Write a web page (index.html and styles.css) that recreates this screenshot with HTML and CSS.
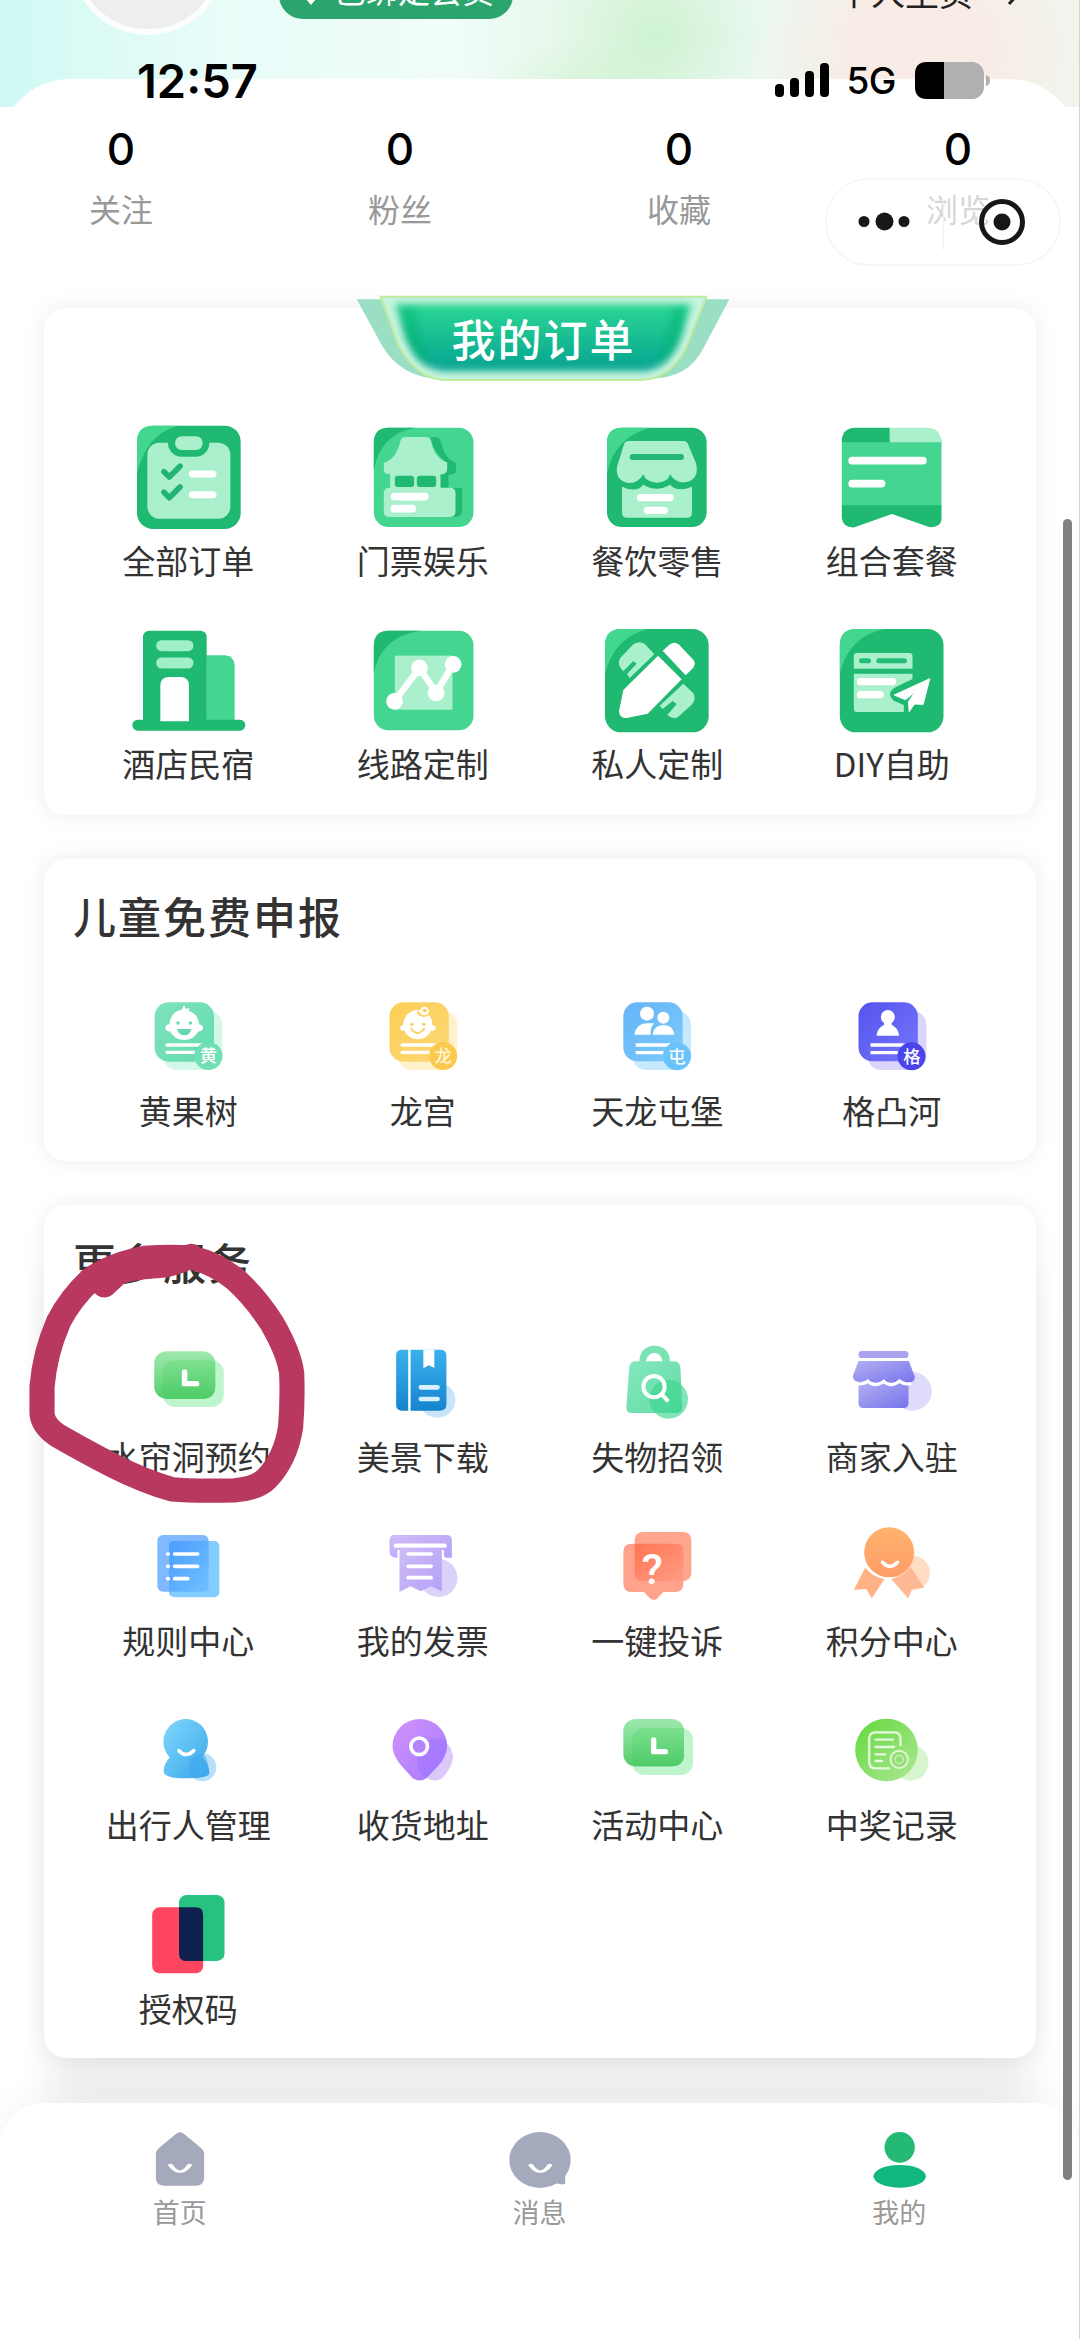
FILE: index.html
```html
<!DOCTYPE html>
<html lang="zh-CN">
<head>
<meta charset="utf-8">
<title>我的</title>
<link rel="stylesheet" href="styles.css">
</head>
<body>
<svg class="defs" aria-hidden="true">
  <defs>
    <linearGradient id="gBanner" x1="0" y1="0" x2="0" y2="1"><stop offset="0" stop-color="#2dd793"/><stop offset="1" stop-color="#04a391"/></linearGradient>
    <linearGradient id="gMint" x1="0" y1="0" x2="1" y2="1"><stop offset="0" stop-color="#80e2bc"/><stop offset="1" stop-color="#62dcae"/></linearGradient>
    <linearGradient id="gYellow" x1="0" y1="0" x2="1" y2="1"><stop offset="0" stop-color="#fbcf55"/><stop offset="1" stop-color="#fcd777"/></linearGradient>
    <linearGradient id="gSky" x1="0" y1="0" x2="1" y2="1"><stop offset="0" stop-color="#65b4f7"/><stop offset="1" stop-color="#7bcbfb"/></linearGradient>
    <linearGradient id="gIndigo" x1="0" y1="0" x2="1" y2="1"><stop offset="0" stop-color="#5553ee"/><stop offset="1" stop-color="#7576fb"/></linearGradient>
    <linearGradient id="gGreen" x1="0" y1="0" x2="0" y2="1"><stop offset="0" stop-color="#7de090"/><stop offset="1" stop-color="#4ecb66"/></linearGradient>
    <linearGradient id="gGreenSoft" x1="0" y1="0" x2="0" y2="1"><stop offset="0" stop-color="#9ee9ad"/><stop offset="1" stop-color="#54cd6c"/></linearGradient>
    <linearGradient id="gBook" x1="0" y1="0" x2="0" y2="1"><stop offset="0" stop-color="#3bb1ec"/><stop offset="1" stop-color="#1584cf"/></linearGradient>
    <linearGradient id="gBag" x1="0" y1="0" x2="1" y2="1"><stop offset="0" stop-color="#84e8be"/><stop offset="1" stop-color="#63dba4"/></linearGradient>
    <linearGradient id="gShop" x1="0" y1="0" x2="1" y2="1"><stop offset="0" stop-color="#b4aff2"/><stop offset="1" stop-color="#7673ed"/></linearGradient>
    <linearGradient id="gDoc" x1="0" y1="0" x2="1" y2="1"><stop offset="0" stop-color="#4c9cff"/><stop offset="1" stop-color="#6fc1ff"/></linearGradient>
    <linearGradient id="gLilac" x1="0" y1="0" x2="1" y2="1"><stop offset="0" stop-color="#cfbdf7"/><stop offset="1" stop-color="#b5a0f7"/></linearGradient>
    <linearGradient id="gCoral" x1="0" y1="0" x2="1" y2="1"><stop offset="0" stop-color="#ff7650"/><stop offset="1" stop-color="#ff9c86"/></linearGradient>
    <linearGradient id="gOrange" x1="0" y1="0" x2="0" y2="1"><stop offset="0" stop-color="#ffb36d"/><stop offset="1" stop-color="#ff9c68"/></linearGradient>
    <linearGradient id="gPerson" x1="0" y1="0" x2="1" y2="1"><stop offset="0" stop-color="#80d8fc"/><stop offset="1" stop-color="#3aa6ea"/></linearGradient>
    <linearGradient id="gPin" x1="0" y1="0" x2="1" y2="1"><stop offset="0" stop-color="#d292fb"/><stop offset="1" stop-color="#a67bff"/></linearGradient>
    <linearGradient id="gLime" x1="0" y1="0" x2="1" y2="1"><stop offset="0" stop-color="#62d93a"/><stop offset="1" stop-color="#aee897"/></linearGradient>
    <filter id="soft" x="-20%" y="-20%" width="140%" height="140%"><feGaussianBlur stdDeviation="11"/></filter>
    <clipPath id="cupClip"><path d="M152 48H1129L1070 200Q1020 302 930 302H350Q260 302 205 195Z"/></clipPath>
  </defs>
</svg>

<div class="page">
  <header class="profile">
    <div class="avatar"></div>
    <div class="member">
      <svg class="member-icon" viewBox="0 0 28 28"><path d="M14 27L4 15Q0 6 8 3Q12 2 14 6Q16 2 20 3Q28 6 24 15Z" fill="#fff"/></svg>
      <span>已绑定会员</span>
    </div>
    <div class="homepage"><span>个人主页</span>
      <svg class="chevron" viewBox="0 0 16 30"><path d="M2 2L14 15L2 28" fill="none" stroke="#222" stroke-width="3"/></svg>
    </div>
  </header>

  <main class="panel">
    <section class="stats">
      <div class="stat"><b>0</b><span>关注</span></div>
      <div class="stat"><b>0</b><span>粉丝</span></div>
      <div class="stat"><b>0</b><span>收藏</span></div>
      <div class="stat"><b>0</b><span>浏览</span></div>
    </section>

    <section class="card orders">
      <div class="banner">
        <svg viewBox="0 0 1260 360">
          <path d="M80 58H1198L1120 205Q1075 296 960 296H320Q210 290 155 195Z" fill="#9adfc4"/>
          <g clip-path="url(#cupClip)">
            <rect x="140" y="40" width="1000" height="270" fill="#c6f3de"/>
            <path d="M195 72H1085L1045 190Q1000 278 930 273H350Q270 273 230 180Z" fill="url(#gBanner)" filter="url(#soft)"/>
            <path d="M215 85H250L300 260Q250 235 222 150ZM1065 85H1032L980 260Q1030 235 1058 150Z" fill="#05b273" opacity=".5" filter="url(#soft)"/>
          </g>
          <path d="M152 50H1129L1070 200Q1020 300 930 300H350Q260 300 205 195Z" fill="none" stroke="#bfeb9f" stroke-width="6"/>
        </svg>
        <h2>我的订单</h2>
      </div>
      <div class="grid">
        <div class="item"><svg viewBox="84 24 360 360">
          <rect x="111" y="47" width="311" height="310" rx="48" fill="#1fb972"/><path d="M159 47H235Q140 70 111 190V95Q111 47 159 47Z" fill="#42d68f"/>
          <rect x="142" y="98" width="249" height="228" rx="36" fill="#aaf0cd"/><rect x="204" y="58" width="124" height="82" rx="41" fill="#1fb972"/><rect x="225" y="79" width="83" height="41" rx="20" fill="#aaf0cd"/>
          <path d="M192 185L208 201L240 169M192 247L208 263L240 231" fill="none" stroke="#23b377" stroke-width="17" stroke-linecap="round" stroke-linejoin="round"/>
          <path d="M277 192H339M277 254H339" stroke="#fff" stroke-width="21" stroke-linecap="round"/></svg><span>全部订单</span></div>
        <div class="item"><svg viewBox="787.5 24 360 360">
          <rect x="820" y="53" width="299" height="298" rx="44" fill="#44d691"/><path d="M864 53H945Q840 70 820 180V97Q820 53 864 53Z" fill="#1fb972"/>
          <path d="M990 82H1008Q1018 84 1022 98Q1032 145 1066 160V186Q1060 195 1044 194V234H1085V305Q1082 321 1060 321H1040V234H1016V194H1030V150Q1000 130 990 82Z" fill="#1fb972"/>
          <path d="M900 92Q903 81 915 81H976Q987 81 992 95Q1003 145 1040 157V180Q1038 192 1025 192H862Q850 190 850 178V158Q887 148 900 92Z" fill="#aaf0cd"/>
          <path d="M869 190H1020V240H869Z" fill="#aaf0cd"/><rect x="883" y="197" width="58" height="34" rx="9" fill="#1fb972"/><rect x="949" y="197" width="58" height="34" rx="9" fill="#1fb972"/>
          <rect x="850" y="233" width="215" height="88" rx="15" fill="#aaf0cd"/><path d="M882 260H973M882 296H935" stroke="#fff" stroke-width="23" stroke-linecap="round"/></svg><span>门票娱乐</span></div>
        <div class="item"><svg viewBox="111 24 360 360">
          <rect x="141" y="53" width="299" height="298" rx="44" fill="#1fb972"/><path d="M185 53H270Q165 80 141 190V97Q141 53 185 53Z" fill="#42d68f"/>
          <path d="M186 230Q228 250 250 224Q290 248 330 224Q352 248 396 230V308Q396 323 381 323H201Q186 323 186 308Z" fill="#aaf0cd"/>
          <path d="M205 93H370Q380 93 384 103L408 160Q418 200 388 214Q350 226 330 193Q325 218 290 218Q257 216 250 193Q235 220 205 219Q166 212 171 170L192 103Q196 93 205 93Z" fill="#aaf0cd"/>
          <path d="M218 141H363" stroke="#23b875" stroke-width="18" stroke-linecap="round"/><path d="M242 263H330M262 301H313" stroke="#fff" stroke-width="22" stroke-linecap="round"/></svg><span>餐饮零售</span></div>
        <div class="item"><svg viewBox="814.5 24 360 360">
          <path d="M844 90H1143V290H844Z" fill="#44d691"/><path d="M844 97V88Q848 53 885 53H988V97Z" fill="#1fb972"/><path d="M988 53H1103Q1140 55 1143 97H988Z" fill="#aaf0cd"/>
          <path d="M844 286H1143V330Q1140 352 1108 352L994 312L882 352Q848 354 844 325Z" fill="#1fb972"/>
          <path d="M875 152H1087M875 221H963" stroke="#fff" stroke-width="23" stroke-linecap="round"/></svg><span>组合套餐</span></div>
        <div class="item"><svg viewBox="84 633 360 360">
          <path d="M319 736H375Q404 740 404 766V935H319Z" fill="#44d691"/><path d="M129 935V682Q129 662 149 662H300Q320 662 320 682V935Z" fill="#1fb972"/>
          <rect x="97" y="929" width="339" height="33" rx="16" fill="#1fb972"/><path d="M181 934V827Q181 801 207 801H241Q267 801 267 827V934Z" fill="#fff"/>
          <path d="M185 707H264M185 759H264" stroke="#a0efc6" stroke-width="33" stroke-linecap="round"/></svg><span>酒店民宿</span></div>
        <div class="item"><svg viewBox="787.5 633 360 360">
          <rect x="820" y="662" width="299" height="299" rx="44" fill="#44d691"/><path d="M864 662H960Q840 680 820 790V706Q820 662 864 662Z" fill="#1fb972"/>
          <rect x="883" y="737" width="173" height="162" fill="#aaf0cd"/><path d="M882 874L957 774L1007 848L1058 763" fill="none" stroke="#fff" stroke-width="19"/>
          <g fill="#fff"><circle cx="882" cy="874" r="25"/><circle cx="957" cy="774" r="25"/><circle cx="1007" cy="849" r="25"/><circle cx="1058" cy="763" r="25"/></g></svg><span>线路定制</span></div>
        <div class="item"><svg viewBox="111 633 360 360">
          <rect x="135" y="657" width="311" height="310" rx="48" fill="#1fb972"/><path d="M183 657H265Q165 680 135 790V705Q135 657 183 657Z" fill="#42d68f"/>
          <path d="M220 703Q240 690 255 703L283 733L209 804L201 792L230 761L220 753L190 784Q170 765 180 745ZM370 821L400 850Q410 867 395 884L353 922Q340 930 322 915L350 882L338 873L308 897L299 887Z" fill="#aaf0cd"/>
          <path d="M294 737L365 808L263 911L200 924Q178 926 177 904L190 840Z" fill="#fff"/><path d="M308 722L330 703Q343 692 358 705L397 746Q410 758 400 773L377 796Z" fill="#fff"/></svg><span>私人定制</span></div>
        <div class="item"><svg viewBox="814.5 633 360 360">
          <rect x="838" y="657" width="311" height="310" rx="48" fill="#1fb972"/><path d="M886 657H970Q865 680 838 790V705Q838 657 886 657Z" fill="#42d68f"/>
          <path d="M880 776V739Q880 729 890 729H1046Q1056 729 1056 739V776ZM880 791H1056V807L1005 832Q975 850 1000 872L1030 885V906H890Q880 906 880 896Z" fill="#aaf0cd"/>
          <path d="M903 752H924M955 752H1032" stroke="#24bd77" stroke-width="15" stroke-linecap="round"/><path d="M900 815H996M900 854H959" stroke="#fff" stroke-width="22" stroke-linecap="round"/>
          <path d="M1108 806L1001 855L1035 869L1064 845L1044 875L1046 905L1062 882L1088 883Z" fill="#fff" stroke="#fff" stroke-width="3"/></svg><span>DIY自助</span></div>
      </div>
    </section>

    <section class="card small">
      <h2>儿童免费申报</h2>
      <div class="grid">
        <div class="item"><svg viewBox="318 432 312 312">
          <rect x="400" y="513" width="177" height="177" rx="42" fill="#d3f7e9"/><rect x="374" y="487" width="178" height="178" rx="42" fill="url(#gMint)"/>
          <path d="M418 553Q422 515 455 509L462 496L467 506L480 505L475 512Q505 520 507 553Q519 555 519 565Q516 575 504 575Q490 600 463 600Q435 600 421 575Q407 574 406 564Q407 554 418 553Z" fill="#fff"/><path d="M441 567H485Q479 586 463 586Q447 586 441 567Z" fill="#64d9ac"/><circle cx="444" cy="549" r="5" fill="#64d9ac"/><circle cx="481" cy="549" r="5" fill="#64d9ac"/>
          <path d="M411 615H514M411 637H495" stroke="#fff" stroke-width="10" stroke-linecap="round"/><circle cx="535" cy="648" r="42" fill="#70dfb4"/><text x="535" y="667" class="mark">黄</text></svg><span>黄果树</span></div>
        <div class="item"><svg viewBox="1021.5 432 312 312">
          <rect x="1103" y="513" width="177" height="177" rx="42" fill="#fff1c9"/><rect x="1077" y="487" width="178" height="178" rx="42" fill="url(#gYellow)"/>
          <circle cx="1162" cy="554" r="44" fill="#fff"/><circle cx="1117" cy="564" r="8" fill="#fff"/><circle cx="1207" cy="564" r="8" fill="#fff"/><path d="M1160 515Q1175 535 1194 522M1190 507Q1180 507 1183 517" fill="none" stroke="#fbcf5e" stroke-width="7"/><circle cx="1182" cy="513" r="10" fill="none" stroke="#fff" stroke-width="6"/><path d="M1141 564Q1161 594 1183 564" fill="none" stroke="#fbcf5e" stroke-width="6"/><circle cx="1144" cy="553" r="5" fill="#fbcf5e"/><circle cx="1180" cy="553" r="5" fill="#fbcf5e"/>
          <path d="M1115 615H1218M1115 637H1198" stroke="#fff" stroke-width="10" stroke-linecap="round"/><circle cx="1238" cy="648" r="42" fill="#fac94e"/><text x="1238" y="667" class="mark pale">龙</text></svg><span>龙宫</span></div>
        <div class="item"><svg viewBox="135 72 312 312">
          <rect x="217" y="153" width="176" height="177" rx="42" fill="#c7e9fd"/><rect x="190" y="127" width="178" height="177" rx="42" fill="url(#gSky)"/>
          <g fill="#fff"><circle cx="261" cy="161" r="21"/><circle cx="310" cy="173" r="18"/><path d="M223 224Q228 191 261 190H282Q270 202 272 224ZM278 224Q281 196 311 195Q340 196 343 224Z"/></g>
          <path d="M227 255H330M227 278H311" stroke="#fff" stroke-width="10"/><circle cx="351" cy="289" r="42" fill="#6ac3fb"/><text x="351" y="308" class="mark">屯</text></svg><span>天龙屯堡</span></div>
        <div class="item"><svg viewBox="838.5 72 312 312">
          <rect x="921" y="153" width="177" height="177" rx="42" fill="#dad5fd"/><rect x="894" y="127" width="178" height="177" rx="42" fill="url(#gIndigo)"/>
          <g fill="#fff"><circle cx="982" cy="171" r="21"/><path d="M972 184H992L994 195Q1013 203 1016 227H948Q951 203 970 195Z"/></g>
          <path d="M930 255H1033M930 278H1012" stroke="#fff" stroke-width="10"/><circle cx="1053" cy="289" r="42" fill="#4a45ea"/><text x="1054" y="308" class="mark">格</text></svg><span>格凸河</span></div>
      </div>
    </section>

    <section class="card small more">
      <h2>更多服务</h2>
      <div class="grid">
        <div class="item"><svg viewBox="395 450 302 312" preserveAspectRatio="none">
          <rect x="473" y="541" width="177" height="140" rx="36" fill="#bff5cc"/><rect x="448" y="514" width="177" height="142" rx="36" fill="url(#gGreenSoft)"/><path d="M473 577Q473 541 509 541H625V620Q625 656 589 656H480Q473 645 473 630Z" fill="url(#gGreen)"/>
          <path d="M536 576V611H571" fill="none" stroke="#fff" stroke-width="16" stroke-linecap="round" stroke-linejoin="round"/></svg><span>水帘洞预约</span></div>
        <div class="item"><svg viewBox="1076 450 302 312" preserveAspectRatio="none">
          <circle cx="1268" cy="660" r="53" fill="#c9e4f8"/><path d="M1164 509H1184V692H1164Q1149 690 1149 676V525Q1149 510 1164 509ZM1191 509H1280Q1295 511 1295 526V676Q1293 692 1276 692H1191Z" fill="url(#gBook)"/>
          <path d="M1228 509H1260V564L1244 556L1228 565Z" fill="#fff"/><path d="M1221 622H1269M1221 657H1269" stroke="#d9f1ff" stroke-width="14" stroke-linecap="round"/></svg><span>美景下载</span></div>
        <div class="item"><svg viewBox="135 30 312 312">
          <path d="M238 125Q240 78 284 77Q328 78 330 125H307Q304 99 284 99Q263 99 257 125Z" fill="#7ae3b4"/><path d="M227 124H341Q359 124 361 142L367 262Q367 279 350 279H216Q198 279 199 260L208 142Q210 124 227 124Z" fill="url(#gBag)"/>
          <circle cx="326" cy="238" r="58" fill="#3cd690" opacity=".65"/><circle cx="282" cy="200" r="32" fill="none" stroke="#fff" stroke-width="12"/><path d="M305 223L325 244" stroke="#fff" stroke-width="12"/></svg><span>失物招领</span></div>
        <div class="item"><svg viewBox="838.5 30 312 312">
          <circle cx="1056" cy="214" r="58" fill="#dfdcfb"/><rect x="894" y="93" width="150" height="21" rx="10" fill="#aaa4ef"/>
          <path d="M894 123H1045L1063 170Q1063 187 1046 187Q1028 187 1016 176Q1006 191 991 191Q979 190 971 178Q961 191 946 191Q931 190 923 178Q912 187 897 186Q876 185 877 168Z" fill="url(#gShop)"/>
          <path d="M894 187H1044V250Q1043 264 1030 264H908Q894 264 894 250Z" fill="url(#gShop)"/><path d="M886 191Q910 194 922 184Q944 204 969 184Q991 204 1016 184Q1032 195 1052 191" fill="none" stroke="#fff" stroke-width="9"/></svg><span>商家入驻</span></div>

        <div class="item"><svg viewBox="108 12 312 312">
          <rect x="172" y="75" width="154" height="170" rx="17" fill="#80b9fd"/><rect x="207" y="93" width="151" height="169" rx="15" fill="#83ccff"/><path d="M207 108Q207 93 222 93H326V230Q326 245 311 245H207Z" fill="url(#gDoc)"/>
          <path d="M224 132H293M224 169H293M224 206H263M203 132H205M203 169H205M203 206H205" stroke="#fff" stroke-width="11" stroke-linecap="round"/></svg><span>规则中心</span></div>
        <div class="item"><svg viewBox="811.5 12 312 312">
          <circle cx="1014" cy="204" r="57" fill="#dcd1fa"/><path d="M883 75H1038Q1054 75 1054 91V143H1038Q1030 143 1030 132V120H891V143Q867 143 867 125V91Q867 75 883 75Z" fill="url(#gLilac)"/>
          <path d="M886 107H1032" stroke="#fff" stroke-width="13" stroke-linecap="round"/><path d="M897 113H1024V244L991 229L961 244L930 229L897 246Z" fill="url(#gLilac)"/>
          <path d="M923 132H992M923 169H992M923 203H992" stroke="#fff" stroke-width="11" stroke-linecap="round"/></svg><span>我的发票</span></div>
        <div class="item"><svg viewBox="135 12 312 312">
          <rect x="224" y="66" width="170" height="147" rx="24" fill="#ffa48d"/><path d="M214 101H346Q370 101 370 125V221Q370 246 346 246H310L291 266Q280 274 269 264L252 246H214Q190 246 190 221V125Q190 101 214 101Z" fill="#ffa28c"/><path d="M224 101H346Q370 101 370 125V213H248Q224 213 224 189Z" fill="url(#gCoral)"/>
          <text x="277" y="223" class="question">?</text></svg><span>一键投诉</span></div>
        <div class="item"><svg viewBox="838.5 12 312 312">
          <circle cx="1056" cy="189" r="52" fill="#ffdcc3"/><path d="M914 173Q936 200 972 207L934 265L917 237L880 239Z" fill="#ffb283"/><path d="M992 207Q1030 199 1050 170L1091 233L1055 237L1043 265Z" fill="#ffb894"/>
          <circle cx="986" cy="127" r="75" fill="url(#gOrange)"/><path d="M966 157Q988 181 1011 157" fill="none" stroke="#fff" stroke-width="11" stroke-linecap="round"/></svg><span>积分中心</span></div>

        <div class="item"><svg viewBox="108 564 312 312">
          <circle cx="307" cy="772" r="42" fill="#b8e0fb"/><path d="M257 627A68 68 0 0 1 306 741Q328 765 328 790Q324 805 258 805Q194 805 191 785Q190 765 209 742A68 68 0 0 1 257 627Z" fill="url(#gPerson)"/>
          <path d="M266 772A42 42 0 0 1 310 731Q325 748 328 790Q324 803 280 804Q266 792 266 772Z" fill="#3fa8ec" opacity=".6"/><path d="M237 722Q258 745 281 722" fill="none" stroke="#fff" stroke-width="11" stroke-linecap="round"/></svg><span>出行人管理</span></div>
        <div class="item"><svg viewBox="811.5 564 312 312">
          <path d="M1000 690Q1050 686 1058 740Q1056 770 1026 804Q1003 819 980 804L945 750Z" fill="#dcc9fb"/><path d="M958 627A82 82 0 0 1 1040 709Q1036 744 1010 770L978 804Q958 819 936 804L900 764Q876 734 876 709A82 82 0 0 1 958 627Z" fill="url(#gPin)"/>
          <path d="M950 750Q955 700 985 690Q1015 682 1038 692Q1044 740 1010 770L978 804Q950 790 950 750Z" fill="#9f74ff" opacity=".6"/><circle cx="956" cy="709" r="25" fill="#b583fa" stroke="#fff" stroke-width="11"/></svg><span>收货地址</span></div>
        <div class="item"><svg viewBox="135 564 312 312">
          <rect x="217" y="654" width="182" height="141" rx="36" fill="#bff5cc"/><rect x="190" y="627" width="182" height="142" rx="36" fill="url(#gGreenSoft)"/><path d="M217 690Q217 654 253 654H372V733Q372 769 336 769H224Q217 755 217 740Z" fill="url(#gGreen)"/>
          <path d="M281 690V725H316" fill="none" stroke="#fff" stroke-width="16" stroke-linecap="round" stroke-linejoin="round"/></svg><span>活动中心</span></div>
        <div class="item"><svg viewBox="838.5 564 312 312">
          <circle cx="1050" cy="758" r="54" fill="#d7f5cf"/><circle cx="978" cy="720" r="94" fill="url(#gLime)"/>
          <path d="M1020 706V686Q1020 667 1001 667H945Q926 667 926 686V756Q926 775 945 775H986M945 689H997M945 711H1001M945 733H974M945 753H965" fill="none" stroke="#e6f9dd" stroke-width="7" stroke-linecap="round"/><circle cx="1016" cy="748" r="26" fill="#94de79" stroke="#dcf6d0" stroke-width="6"/><circle cx="1016" cy="748" r="12" fill="none" stroke="#bdf0a9" stroke-width="5"/></svg><span>中奖记录</span></div>

        <div class="item"><svg viewBox="197.5 96 151 312" preserveAspectRatio="none">
          <rect x="221" y="172" width="74" height="198" rx="11" ry="22" fill="#ff4560"/><rect x="260" y="135" width="66" height="198" rx="11" ry="22" fill="#27c281"/><path d="M260 172H284Q295 172 295 194V333H271Q260 333 260 311Z" fill="#0f214f"/></svg><span>授权码</span></div>
      </div>
      <svg class="scribble" viewBox="0 0 1568 1020" preserveAspectRatio="none"><path d="M303 316L340 280Q380 262 480 256Q525 245 555 228M480 256Q440 262 395 258Q300 265 262 300Q205 355 170 425Q130 520 122 620V700Q124 735 165 765Q240 810 330 858Q420 905 500 928Q560 934 680 931Q745 927 775 895Q830 835 844 740Q850 660 847 580Q840 520 790 430Q740 350 680 295Q620 248 560 234Q500 228 420 234Q360 245 300 275" fill="none" stroke="#b8385f" stroke-width="73" stroke-linecap="round" stroke-linejoin="round"/></svg>
    </section>
  </main>

  <nav class="tabs">
    <div class="tab"><svg viewBox="203 840 116 180" preserveAspectRatio="none"><path d="M255 852Q261 842 267 852L291 893Q296 901 296 912V986Q294 1006 285 1007H237Q227 1005 226 986V912Q226 901 231 893Z" fill="#a4a9bc"/><path d="M247 945Q261 985 275 945" fill="none" stroke="#fff" stroke-width="7" stroke-linecap="round"/></svg><span>首页</span></div>
    <div class="tab"><svg viewBox="726.5 840 116 180" preserveAspectRatio="none"><ellipse cx="784.5" cy="930" rx="44.5" ry="84" fill="#a4a9bc"/><path d="M821 965V998Q821 1005 815 1003L797 995Z" fill="#a4a9bc"/><path d="M771 945Q785 985 799 945" fill="none" stroke="#fff" stroke-width="7" stroke-linecap="round"/></svg><span>消息</span></div>
    <div class="tab"><svg viewBox="1249.5 840 116 180" preserveAspectRatio="none"><ellipse cx="1308.5" cy="892" rx="22" ry="46" fill="#24ba73"/><ellipse cx="1308.5" cy="979" rx="38" ry="34" fill="#12b780"/></svg><span>我的</span></div>
  </nav>

  <div class="status">
    <span class="clock">12:57</span>
    <div class="signal">
      <svg class="bars" viewBox="0 0 54 34"><g fill="#000"><rect x="0" y="21" width="9" height="13" rx="4"/><rect x="15" y="15" width="9" height="19" rx="4"/><rect x="30" y="8" width="9" height="26" rx="4"/><rect x="45" y="0" width="9" height="34" rx="4"/></g></svg>
      <span>5G</span>
      <svg class="battery" viewBox="0 0 76 37"><rect width="69" height="37" rx="12" fill="#b0b0b0"/><path d="M12 0H29V37H12Q0 37 0 25V12Q0 0 12 0Z" fill="#000"/><path d="M71 13Q75 14 75 18.500Q75 23 71 24Z" fill="#b0b0b0"/></svg>
    </div>
  </div>
  <svg class="capsule" viewBox="0 0 236 88"><rect x="1" y="1" width="234" height="86" rx="43" fill="#fff" fill-opacity=".6" stroke="#f5f5f5" stroke-width="1.500"/><path d="M118.500 24V72" stroke="#f3f3f3" stroke-width="1.500"/><g fill="#171717"><circle cx="39" cy="43.500" r="5.500"/><circle cx="59.500" cy="43.500" r="9"/><circle cx="79" cy="43.500" r="5.500"/><circle cx="177" cy="44" r="8.500"/></g><circle cx="177" cy="44" r="20.500" fill="none" stroke="#171717" stroke-width="5"/></svg>
  <div class="scrollbar"></div>
</div>
</body>
</html>
```
FILE: styles.css
```css
* { box-sizing: border-box; }
body {
  margin: 0;
  background: #fff;
  font-family: "Noto Sans CJK SC", sans-serif;
  color: #333;
}
.defs { position: absolute; width: 0; height: 0; }
.page {
  position: relative;
  display: flex;
  flex-direction: column;
  width: 1080px;
  height: 2339px;
  overflow: hidden;
  border-right: 1px solid #d4d4d4;
  background:
    radial-gradient(ellipse 110px 110px at 655px 35px, #c9f2ccd9, #c9f2cc00),
    radial-gradient(ellipse 110px 60px at 590px 100px, #cdf2ccb0, #cdf2cc00),
    radial-gradient(ellipse 170px 150px at 920px 50px, #f9ebe5 35%, #f9ebe500),
    linear-gradient(90deg, #cff9f6 0, #dafaf5 80px, #e8fcf8 220px, #f1fdfa 450px, #e9f8ec 540px, #eaf8f1 760px, #f0f5ee 1080px);
  background-size: 100% 107px;
  background-repeat: no-repeat;
}

.profile { position: relative; display: flex; flex: none; height: 79px; padding: 0 56px 0 70px; }
.avatar { flex: none; width: 156px; height: 156px; margin-top: -121px; border: 6px solid #fcfefd; border-radius: 50%; background: #eee; }
.member {
  display: flex; align-items: center; gap: 10px;
  width: 234px; height: 56px; margin: -37px 0 0 53px; padding-left: 19px;
  border-radius: 24px; background: #2ba56d; color: #fff;
  font-size: 32px; line-height: 46px; white-space: nowrap;
}
.member span { margin-top: -4px; }
.member-icon { width: 26px; height: 26px; margin-top: 3px; flex: none; }
.homepage { display: flex; align-items: center; gap: 34px; height: 46px; margin: -32px 0 0 auto; font-size: 34px; color: #222; white-space: nowrap; }
.homepage .chevron { width: 16px; height: 30px; }

.panel { display: flex; flex-direction: column; gap: 44px; flex: none; padding: 0 43px 0 44px; border-radius: 70px 70px 0 0; background: #fff; }
.stats { display: flex; justify-content: space-between; height: 185px; padding: 43px 46px 0 45px; }
.stat { display: flex; flex-direction: column; align-items: center; width: 64px; }
.stat b { font: 500 44px/54px Inter, sans-serif; color: #000; }
.stat span { margin-top: 9px; font-size: 32px; line-height: 46px; color: #999; }

.card { position: relative; border-radius: 22px; padding: 0 27px; background: #fff; box-shadow: 0 0 22px rgba(0, 0, 0, .08); }
.orders { height: 507px; padding-top: 110px; }
.card h2 { margin: 0; font-weight: 500; font-size: 43px; letter-spacing: 2px; }
.banner { position: absolute; left: 286px; top: -28px; width: 420px; height: 120px; }
.banner svg { display: block; width: 420px; height: 120px; }
.card .banner h2 { position: absolute; inset: 28px 0 auto 7px; line-height: 60px; text-align: center; color: #fff; font-size: 44px; }

.grid { display: grid; grid-template-columns: repeat(4, 1fr); row-gap: 37px; }
.item { display: flex; flex-direction: column; align-items: center; white-space: nowrap; }
.item svg { width: 120px; height: 120px; }
.item span { font-size: 33px; line-height: 46px; height: 46px; margin-top: -1px; margin-bottom: 1px; }
.small { height: 302px; }
.small h2 { height: 125px; margin-left: 2px; padding-top: 26px; line-height: 60px; }
.small .grid { row-gap: 34px; }
.small .item svg { width: 104px; height: 104px; }
.more { height: 853px; box-shadow: 0 0 22px rgba(0, 0, 0, .07), 0 60px 36px -6px rgba(0, 25, 0, .07); }
.mark { font-size: 52px; font-weight: 500; text-anchor: middle; fill: #fff; }
.pale { fill: #fff7d8; }
.question { font: 500 130px Roboto, sans-serif; text-anchor: middle; fill: #fff; }
.scribble { position: absolute; left: -44px; top: -25px; width: 540px; height: 340px; }

.tabs {
  position: relative;
  display: flex; flex: none; height: 236px; margin-top: 45px; padding-top: 27px;
  border-radius: 44px 44px 0 0; background: #fff;
  box-shadow: 0 0 40px rgba(0, 30, 0, .05);
}
.tab { display: flex; flex: 1; flex-direction: column; align-items: center; gap: 4px; }
.tab svg { width: 80px; height: 60px; }
.tab span { font-size: 27px; line-height: 36px; color: #999; }

.status { position: absolute; left: 0; top: 50px; width: 1080px; height: 60px; display: flex; align-items: center; justify-content: space-between; padding: 0 89px 0 137px; font-family: Inter, sans-serif; color: #000; }
.clock { font-size: 47px; font-weight: 600; }
.signal { display: flex; align-items: center; }
.signal span { margin: 0 19px 0 17px; font-size: 37px; font-weight: 500; letter-spacing: -.5px; }
.bars { width: 54px; height: 34px; }
.battery { width: 76px; height: 37px; }
.capsule { position: absolute; left: 825px; top: 178px; width: 236px; height: 88px; }
.scrollbar { position: absolute; left: 1063px; top: 519px; width: 9px; height: 1661px; border-radius: 5px; background: #808080; }
```
